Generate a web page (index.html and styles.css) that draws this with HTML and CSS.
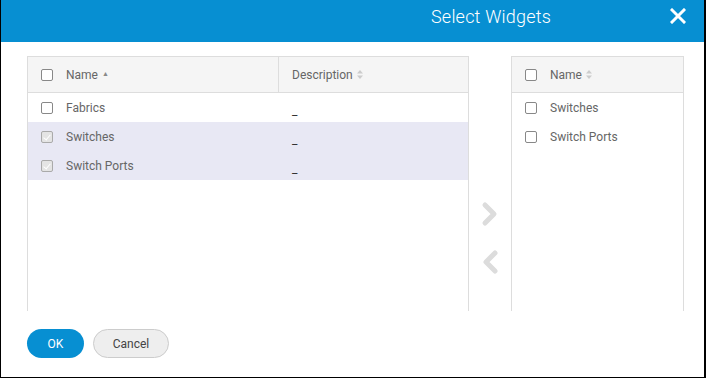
FILE: index.html
```html
<!DOCTYPE html>
<html lang="en">
<head>
    <meta charset="UTF-8">
    <title>Select Widgets</title>
    <link rel="stylesheet" href="styles.css">
</head>
<body>
    <div class="dialog">
        <div class="dialog-header">
            <h1>Select Widgets</h1>
            <span class="close">
                <svg width="16" height="16" viewBox="0 0 16 16"><path d="M2 2 L14 14 M14 2 L2 14" stroke="#fff" stroke-width="3" stroke-linecap="square"/></svg>
            </span>
        </div>

        <div class="dialog-body">
            <div class="table table-left">
                <div class="row head">
                    <div class="cell cell-name"><span class="check"></span>Name <span class="sort up">&#9650;</span></div>
                    <div class="cell cell-desc">Description <span class="sort both"><svg width="6" height="9" viewBox="0 0 6 9"><path d="M3 0 L6 3.5 L0 3.5 Z M3 9 L6 5.5 L0 5.5 Z" fill="#ccc"/></svg></span></div>
                </div>
                <div class="row">
                    <div class="cell cell-name"><span class="check"></span>Fabrics</div>
                    <div class="cell cell-desc dash">_</div>
                </div>
                <div class="row selected">
                    <div class="cell cell-name"><span class="check disabled"></span>Switches</div>
                    <div class="cell cell-desc dash">_</div>
                </div>
                <div class="row selected">
                    <div class="cell cell-name"><span class="check disabled"></span>Switch Ports</div>
                    <div class="cell cell-desc dash">_</div>
                </div>
            </div>

            <div class="mover">
                <svg width="18" height="26" viewBox="0 0 18 26"><path d="M4 4 L13 13 L4 22" fill="none" stroke="#dcdcdc" stroke-width="5" stroke-linecap="round" stroke-linejoin="round"/></svg>
                <svg width="18" height="26" viewBox="0 0 18 26"><path d="M14 4 L5 13 L14 22" fill="none" stroke="#dcdcdc" stroke-width="5" stroke-linecap="round" stroke-linejoin="round"/></svg>
            </div>

            <div class="table table-right">
                <div class="row head">
                    <div class="cell cell-name"><span class="check"></span>Name <span class="sort both"><svg width="6" height="9" viewBox="0 0 6 9"><path d="M3 0 L6 3.5 L0 3.5 Z M3 9 L6 5.5 L0 5.5 Z" fill="#ccc"/></svg></span></div>
                </div>
                <div class="row">
                    <div class="cell cell-name"><span class="check"></span>Switches</div>
                </div>
                <div class="row">
                    <div class="cell cell-name"><span class="check"></span>Switch Ports</div>
                </div>
            </div>
        </div>

        <div class="dialog-footer">
            <button class="btn btn-primary">OK</button>
            <button class="btn btn-default">Cancel</button>
        </div>
    </div>
</body>
</html>
```

FILE: styles.css
```css
* {
    margin: 0;
    padding: 0;
    box-sizing: border-box;
}

body {
    font-family: Roboto, "Liberation Sans", sans-serif;
    color: #666;
    font-size: 12px;
    background: #fff;
}

.dialog {
    width: 706px;
    height: 378px;
    border-left: 1px solid #000;
    border-right: 2px solid #000;
    border-bottom: 1px solid #000;
    display: flex;
    flex-direction: column;
}

.dialog-header {
    height: 42px;
    background-color: #078fd2;
    display: flex;
    align-items: center;
    padding-right: 18px;
    flex-shrink: 0;
}

.dialog-header h1 {
    margin-left: auto;
    font-size: 18px;
    font-weight: 300;
    letter-spacing: 0.2px;
    color: #fff;
    margin-top: -10px;
}

.close {
    margin-left: 119px;
    display: flex;
    margin-top: -10px;
}

.dialog-body {
    display: flex;
    padding: 14px 0 0 26px;
    height: 269px;
    flex-shrink: 0;
}

.table {
    border: 1px solid #ddd;
    border-bottom: none;
    height: 255px;
}

.table-left {
    width: 442px;
}

.table-right {
    width: 173px;
}

.row {
    display: flex;
    height: 29px;
    align-items: center;
}

.row.head {
    height: 36px;
    background: #f5f5f5;
    border-bottom: 1px solid #ddd;
}

.row.selected {
    background: #e8e8f4;
}

.cell {
    display: flex;
    align-items: center;
    height: 100%;
}

.cell-name {
    width: 251px;
    padding-left: 13px;
}

.table-right .cell-name {
    width: auto;
}

.row.head .cell-name {
    border-right: 1px solid #ddd;
}

.table-right .row.head .cell-name {
    border-right: none;
}

.cell-desc {
    padding-left: 13px;
}

.cell-desc.dash {
    padding-top: 6px;
    color: #333;
}

.check {
    display: inline-block;
    width: 12px;
    height: 12px;
    border: 1px solid #888;
    border-radius: 2px;
    background: #fff;
    margin-right: 13px;
    position: relative;
}

.check.disabled {
    border-color: #aaa;
    background: #e4e4e4;
}

.check.disabled::after {
    content: "";
    position: absolute;
    left: 3px;
    top: 1px;
    width: 3px;
    height: 6px;
    border-right: 1.5px solid #fff;
    border-bottom: 1.5px solid #fff;
    transform: rotate(40deg);
}

.sort {
    margin-left: 4px;
    display: inline-flex;
    align-items: center;
}

.sort.up {
    font-size: 7px;
    color: #888;
    margin-top: -2px;
}

.mover {
    width: 42px;
    display: flex;
    flex-direction: column;
    align-items: center;
    gap: 22px;
    padding-top: 145px;
}

.dialog-footer {
    display: flex;
    gap: 9px;
    padding: 18px 0 0 26px;
}

.btn {
    height: 29px;
    border-radius: 15px;
    font-family: Roboto, "Liberation Sans", sans-serif;
    font-size: 12px;
    cursor: pointer;
}

.btn-primary {
    width: 57px;
    background: #078fd2;
    color: #fff;
    border: none;
}

.btn-default {
    width: 76px;
    background: #eeeeee;
    border: 1px solid #ccc;
    color: #444;
}
```
